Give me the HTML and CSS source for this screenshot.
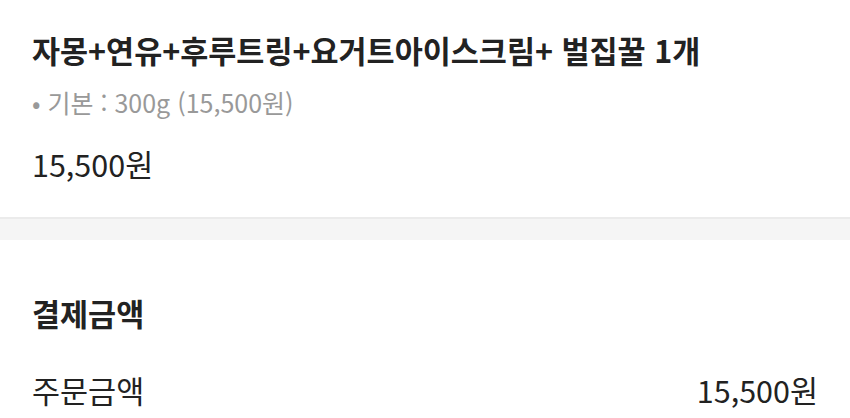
FILE: index.html
```html
<!DOCTYPE html>
<html lang="ko">
<head>
<meta charset="utf-8">
<title>주문 상세</title>
<link rel="stylesheet" href="styles.css">
</head>
<body>
  <section class="item">
    <h2 class="item-name">자몽+연유+후루트링+요거트아이스크림+ 벌집꿀 1개</h2>
    <p class="item-option">• 기본 : 300g (15,500원)</p>
    <p class="item-price">15,500원</p>
  </section>
  <div class="divider"></div>
  <section class="payment">
    <h2 class="payment-title">결제금액</h2>
    <div class="payment-row">
      <span class="label">주문금액</span>
      <span class="amount">15,500원</span>
    </div>
  </section>
</body>
</html>
```
FILE: styles.css
```css
* { box-sizing: border-box; }
html, body {
  margin: 0;
  padding: 0;
  background: #fff;
  font-family: "Noto Sans CJK KR", "Noto Sans", sans-serif;
  color: #222;
}
p, h2 { margin: 0; }

.item {
  padding: 28px 32px 33px;
}
.item-name {
  font-size: 30.5px;
  font-weight: 700;
  line-height: 44px;
  color: #222;
}
.item-option {
  margin-top: 14px;
  font-size: 25px;
  line-height: 32px;
  color: #999;
}
.item-price {
  margin-top: 26px;
  font-size: 30.5px;
  line-height: 40px;
  color: #222;
}

.divider {
  height: 23px;
  background: #f5f5f5;
  border-top: 2px solid #ebebeb;
}

.payment {
  padding: 53px 32px 0;
}
.payment-title {
  font-size: 30.5px;
  font-weight: 700;
  line-height: 40px;
}
.payment-row {
  margin-top: 37px;
  display: flex;
  justify-content: space-between;
  font-size: 30.5px;
  line-height: 40px;
}
```
